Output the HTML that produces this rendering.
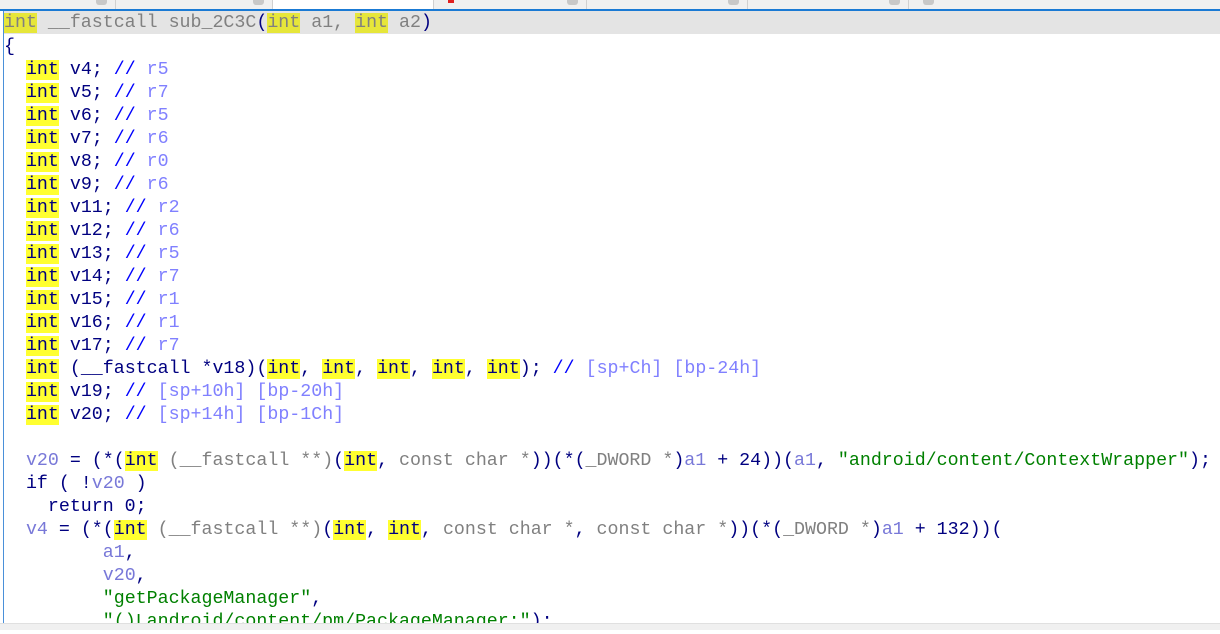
<!DOCTYPE html>
<html><head><meta charset="utf-8"><style>
body{margin:0;width:1220px;height:629px;overflow:hidden;background:#fff;position:relative;font-family:"Liberation Mono",monospace;}
.tabs{position:absolute;left:0;top:0;width:1220px;height:9px;background:#f0f0f0;overflow:hidden;}
.tab{position:absolute;top:0;height:9px;border-right:1px solid #d0d0d0;}
.tab i{position:absolute;right:8px;top:0;width:11px;height:5px;background:#c8c8c8;border-radius:0 0 3px 3px;}
.blue{position:absolute;left:0;top:9px;width:1220px;height:2px;background:#1a7ad4;}
.lb{position:absolute;left:3px;top:11px;width:1px;height:612px;background:#4a90d9;}
.hdr{position:absolute;left:4px;top:11px;width:1216px;height:23px;background:#e4e4e4;}
.code{position:absolute;left:4px;top:1px;font-size:18.3px;white-space:pre;color:#000080;}
.l{position:absolute;left:0;height:23px;line-height:23px;}
.k{background:#ffff30;}
.kh{background:#e6e63a;}
.g{color:#808080}
.c{color:#0000ff}
.r{color:#8080ff}
.v{color:#7878d8}
.s{color:#008000}
.sb{position:absolute;left:0;top:623px;width:1220px;height:6px;background:#f0f0f0;border-top:1px solid #e0e0e0;}
</style></head><body>
<div class="tabs">
<div class="tab" style="left:0;width:115px"><i></i></div>
<div class="tab" style="left:116px;width:156px"><i></i></div>
<div class="tab" style="left:273px;width:160px;background:#fff"><span style="position:absolute;left:175px;top:0;width:6px;height:3px;background:#e02020"></span></div>
<div class="tab" style="left:434px;width:152px"><i></i></div>
<div class="tab" style="left:587px;width:160px"><i></i></div>
<div class="tab" style="left:748px;width:160px"><i></i></div>
<div class="tab" style="left:909px;width:311px"><i style="right:auto;left:14px"></i></div>
</div>
<div class="blue"></div>
<div class="hdr"></div>
<div class="lb"></div>
<div class="code">
<div class="l g" style="top:11px"><span class="kh">int</span> __fastcall sub_2C3C<span style="color:#000080">(</span><span class="kh">int</span> a1, <span class="kh">int</span> a2<span style="color:#000080">)</span></div>
<div class="l" style="top:35px">{</div>
<div class="l" style="top:58px">  <span class="k">int</span> v4; <span class="c">//</span> <span class="r">r5</span></div>
<div class="l" style="top:81px">  <span class="k">int</span> v5; <span class="c">//</span> <span class="r">r7</span></div>
<div class="l" style="top:104px">  <span class="k">int</span> v6; <span class="c">//</span> <span class="r">r5</span></div>
<div class="l" style="top:127px">  <span class="k">int</span> v7; <span class="c">//</span> <span class="r">r6</span></div>
<div class="l" style="top:150px">  <span class="k">int</span> v8; <span class="c">//</span> <span class="r">r0</span></div>
<div class="l" style="top:173px">  <span class="k">int</span> v9; <span class="c">//</span> <span class="r">r6</span></div>
<div class="l" style="top:196px">  <span class="k">int</span> v11; <span class="c">//</span> <span class="r">r2</span></div>
<div class="l" style="top:219px">  <span class="k">int</span> v12; <span class="c">//</span> <span class="r">r6</span></div>
<div class="l" style="top:242px">  <span class="k">int</span> v13; <span class="c">//</span> <span class="r">r5</span></div>
<div class="l" style="top:265px">  <span class="k">int</span> v14; <span class="c">//</span> <span class="r">r7</span></div>
<div class="l" style="top:288px">  <span class="k">int</span> v15; <span class="c">//</span> <span class="r">r1</span></div>
<div class="l" style="top:311px">  <span class="k">int</span> v16; <span class="c">//</span> <span class="r">r1</span></div>
<div class="l" style="top:334px">  <span class="k">int</span> v17; <span class="c">//</span> <span class="r">r7</span></div>
<div class="l" style="top:357px">  <span class="k">int</span> (__fastcall *v18)(<span class="k">int</span>, <span class="k">int</span>, <span class="k">int</span>, <span class="k">int</span>, <span class="k">int</span>); <span class="c">//</span> <span class="r">[sp+Ch] [bp-24h]</span></div>
<div class="l" style="top:380px">  <span class="k">int</span> v19; <span class="c">//</span> <span class="r">[sp+10h] [bp-20h]</span></div>
<div class="l" style="top:403px">  <span class="k">int</span> v20; <span class="c">//</span> <span class="r">[sp+14h] [bp-1Ch]</span></div>
<div class="l" style="top:449px">  <span class="v">v20</span> = (*(<span class="k">int</span> <span class="g">(__fastcall **)</span>(<span class="k">int</span>, <span class="g">const char *</span>))(*(<span class="g">_DWORD *</span>)<span class="v">a1</span> + 24))(<span class="v">a1</span>, <span class="s">"android/content/ContextWrapper"</span>);</div>
<div class="l" style="top:472px">  if ( !<span class="v">v20</span> )</div>
<div class="l" style="top:495px">    return 0;</div>
<div class="l" style="top:518px">  <span class="v">v4</span> = (*(<span class="k">int</span> <span class="g">(__fastcall **)</span>(<span class="k">int</span>, <span class="k">int</span>, <span class="g">const char *</span>, <span class="g">const char *</span>))(*(<span class="g">_DWORD *</span>)<span class="v">a1</span> + 132))(</div>
<div class="l" style="top:541px">         <span class="v">a1</span>,</div>
<div class="l" style="top:564px">         <span class="v">v20</span>,</div>
<div class="l" style="top:587px">         <span class="s">"getPackageManager"</span>,</div>
<div class="l" style="top:610px">         <span class="s">"()Landroid/content/pm/PackageManager;"</span>);</div>
</div>
<div class="sb"></div>
</body></html>
